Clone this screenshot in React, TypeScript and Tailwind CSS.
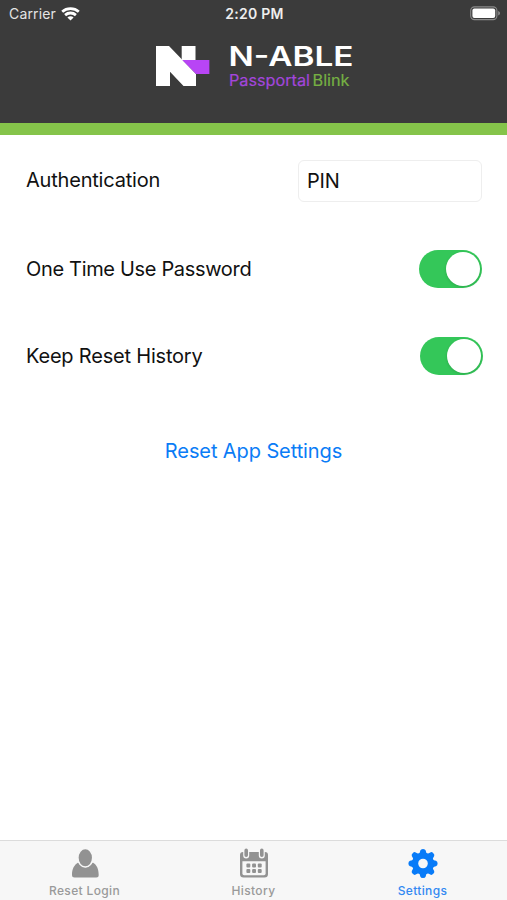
import React from 'react';

function StatusBar() {
  return (
    <div className="flex h-[28px] items-center justify-between text-white">
      <div className="flex w-[150px] items-center pl-[9px]">
        <span className="text-[14px] leading-[28px] tracking-[0.15px] text-[#e4e4e4]">Carrier</span>
        <svg className="-mt-[1px] ml-[5px]" width="19" height="14" viewBox="0 0 19 14" fill="none" stroke="white" strokeWidth="2.8">
          <path d="M1.2 4.7C5.8 .7 13.2 .7 17.8 4.7" />
          <path d="M4.1 8.100C7.2 5.3 11.8 5.3 14.9 8.100" />
          <path d="M6.4 10.4C8.1 8.9 10.9 8.9 12.6 10.4L9.5 13.6Z" fill="white" stroke="none" />
        </svg>
      </div>
      <span className="pl-[2px] text-[14px] font-semibold leading-[28px] tracking-[0.25px] text-[#eeeeee]">2:20 PM</span>
      <div className="flex w-[150px] justify-end pb-[2px] pr-[6px]">
        <svg width="31" height="15" viewBox="0 0 31 15">
          <rect x=".7" y=".9" width="26.2" height="12.7" rx="3.8" fill="none" stroke="#8b8b8b" strokeWidth="1.1" />
          <rect x="2.4" y="2.6" width="22.8" height="9.3" rx="2" fill="white" />
          <path d="M28.2 5c2.4.8 2.4 3.700 0 4.500Z" fill="#8b8b8b" />
        </svg>
      </div>
    </div>
  );
}

function Logo() {
  return (
    <svg className="block" width="210" height="60" viewBox="150 38 210 60">
      <path d="M156 46H169L196 74V86H183.500L170 71.700V86H156Z" fill="white" />
      <path d="M181.700 46H195.500V60.500H182.500L181.700 59.500Z" fill="white" />
      <path d="M182.300 60H209.400V74H196Z" fill="#b845f5" />
      <text x="228.500" y="65.800" fill="white" fontSize="26.500" fontWeight="600" textLength="125" lengthAdjust="spacingAndGlyphs">N-ABLE</text>
      <text x="229" y="86" fill="#a346dc" stroke="#a346dc" strokeWidth=".2" fontSize="16" textLength="81" lengthAdjust="spacingAndGlyphs">Passportal</text>
      <text x="312.500" y="86" fill="#76b043" stroke="#76b043" strokeWidth=".2" fontSize="16" textLength="37" lengthAdjust="spacingAndGlyphs">Blink</text>
    </svg>
  );
}

function Toggle() {
  return (
    <div className="flex h-[38px] w-[63px] items-center justify-end rounded-full bg-[#34c759] pr-[2.5px]">
      <div className="h-[34px] w-[34px] rounded-full bg-white shadow-[0_1px_3px_rgba(0,0,0,0.15)]" />
    </div>
  );
}

function UserIcon() {
  return (
    <svg width="30" height="32" viewBox="0 0 30 32" fill="#929292">
      <path d="M8.200 15.500Q15.500 25 22.800 15.500C26.800 17.800 28.700 22 28.700 28q0 2.500-2.500 2.500H4.500Q2 30.500 2 28c0-6 2.200-10.200 6.200-12.500Z" />
      <ellipse cx="15.300" cy="10.800" rx="7.400" ry="9.300" stroke="#f7f7f7" strokeWidth="1.500" />
    </svg>
  );
}

function CalendarIcon() {
  return (
    <svg width="30" height="32" viewBox="0 0 30 32">
      <path d="M4 5H26q3 0 3 3V27q0 3.500-3.500 3.500H4.500Q1 30.500 1 27V8q0-3 3-3Z" fill="#929292" />
      <path d="M3.400 14.200H26.600V26.500q0 1.700-1.700 1.700H5.100Q3.400 28.200 3.400 26.500Z" fill="#f7f7f7" />
      <g fill="none" strokeLinecap="round">
        <path d="M7.200 4V8.500M22.800 4V8.500" stroke="#f7f7f7" strokeWidth="6" />
        <path d="M7.200 3.400V8.200M22.800 3.400V8.200" stroke="#929292" strokeWidth="3.600" />
      </g>
      <g fill="#929292">
        <rect x="7.400" y="16.500" width="3.900" height="3.900" rx="1" />
        <rect x="13.100" y="16.500" width="3.900" height="3.900" rx="1" />
        <rect x="18.800" y="16.500" width="3.900" height="3.900" rx="1" />
        <rect x="7.400" y="22" width="3.900" height="3.900" rx="1" />
        <rect x="13.100" y="22" width="3.900" height="3.900" rx="1" />
        <rect x="18.800" y="22" width="3.900" height="3.900" rx="1" />
      </g>
    </svg>
  );
}

function GearIcon() {
  const angles = [0, 45, 90, 135, 180, 225, 270, 315];
  return (
    <svg width="30" height="32" viewBox="0 0 30 32">
      <g fill="#087bf8">
        {angles.map((a) => (
          <path key={a} transform={`rotate(${a} 15 16.500)`} d="M10.500 7.500C11.500 6.500 12 5 12.300 3.500Q12.700 1.900 15 1.900T17.700 3.500C18 5 18.500 6.500 19.500 7.500L18 12H12Z" />
        ))}
        <circle cx="15" cy="16.500" r="11" />
      </g>
      <circle cx="15" cy="16.500" r="4.800" fill="#f7f7f7" />
    </svg>
  );
}

function Tab({ icon, label, active }: { icon: React.ReactNode; label: string; active?: boolean }) {
  return (
    <div className={`flex flex-1 flex-col items-center pt-[6px] ${active ? 'text-[#3389f2]' : 'text-[#9a9a9a]'}`}>
      {icon}
      <span className="mt-[4px] text-[12px] font-medium leading-[15px] tracking-[0.35px]">{label}</span>
    </div>
  );
}

export default function App() {
  return (
    <div className="flex h-[900px] w-[507px] flex-col overflow-hidden bg-white font-['Inter','Liberation_Sans',sans-serif] text-[#111111]">
      <header className="h-[135px] shrink-0 border-b-[12px] border-[#85c44a] bg-[#3b3b3b]">
        <StatusBar />
        <div className="flex pl-[150px] pt-[10px]">
          <Logo />
        </div>
      </header>
      <main className="flex flex-1 flex-col pt-[25px] text-[20px] leading-[24px]">
        <div className="flex h-[42px] items-center justify-between pl-[26px] pr-[25px]">
          <span className="pb-[2px] tracking-[-0.2px]">Authentication</span>
          <div className="flex h-[42px] w-[184px] items-center rounded-[6px] border border-[#eeeeee] pl-[8px] tracking-[-0.2px]">PIN</div>
        </div>
        <div className="mt-[48px] flex h-[38px] items-center justify-between pl-[26px] pr-[25px]">
          <span className="tracking-[-0.33px]">One Time Use Password</span>
          <Toggle />
        </div>
        <div className="mt-[49px] flex h-[38px] items-center justify-between pl-[26px] pr-[24px]">
          <span className="tracking-[-0.2px]">Keep Reset History</span>
          <Toggle />
        </div>
        <button className="mt-[64px] self-center tracking-[-0.1px] text-[#0a7cf6]">Reset App Settings</button>
      </main>
      <nav className="flex h-[60px] shrink-0 border-t border-[#dcdcdc] bg-[#f7f7f7]">
        <Tab icon={<UserIcon />} label="Reset Login" />
        <Tab icon={<CalendarIcon />} label="History" />
        <Tab icon={<GearIcon />} label="Settings" active />
      </nav>
    </div>
  );
}
